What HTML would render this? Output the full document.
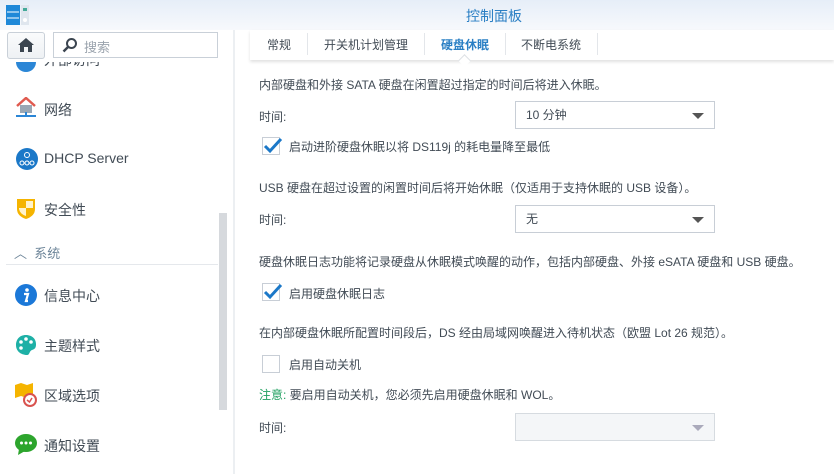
<!DOCTYPE html><html><head><meta charset="utf-8"><style>
*{margin:0;padding:0;box-sizing:border-box}
body{width:834px;height:474px;overflow:hidden;background:#fff;font-family:"Liberation Sans","Noto Sans CJK SC",sans-serif;font-size:12px;color:#414b55;position:relative}
.a{position:absolute;white-space:nowrap}
.title{left:0;top:0;width:834px;height:30px;background:linear-gradient(#e6eef8,#f7f9fc)}
.sb{left:0;top:30px;width:233px;height:444px;background:#fff}
.div{left:233px;top:30px;width:2px;height:444px;background:#eceff2}
.item{left:44px;font-size:14px;color:#414b55}
.sel{width:200px;height:28px;border:1px solid #c8ced6;background:#fff;padding-left:10px;line-height:26px}
.arr{position:absolute;right:10px;top:11px;border-left:6px solid transparent;border-right:6px solid transparent;border-top:6px solid #555}
.cb{width:18px;height:18px;border:1px solid #c8ced6;background:#fff}
</style></head><body>
<div class="a title"></div>
<svg class="a" style="left:6px;top:5px" width="24" height="20"><rect x="0" y="0" width="14" height="20" fill="#1e88d8"/><line x1="1" y1="7" x2="13" y2="7" stroke="#fff"/><line x1="1" y1="13" x2="13" y2="13" stroke="#fff"/><rect x="15" y="0" width="8" height="20" fill="#dfe6ee"/><rect x="17" y="3" width="4" height="3" fill="#4a9"/><circle cx="19" cy="15" r="2" fill="#fff"/></svg>
<div class="a" style="left:466px;top:6px;font-size:14px;color:#2a7fc4">控制面板</div>
<div class="a sb"></div>
<div class="a div"></div>
<div class="a" style="left:16px;top:52px;width:20px;height:20px;border-radius:10px;background:#2b86d6"></div>
<div class="a item" style="top:50px">外部访问</div>
<div class="a" style="left:0;top:30px;width:232px;height:32px;background:#fff"></div>
<div class="a" style="left:7px;top:32px;width:38px;height:27px;border:1px solid #c9d0d8;border-radius:3px;background:linear-gradient(#fafbfc,#eef1f4)"></div>
<svg class="a" style="left:17px;top:37px" width="18" height="16"><path d="M9 1 L1 8 H3 V15 H7 V10 H11 V15 H15 V8 H17 Z" fill="#3b4550"/></svg>
<div class="a" style="left:53px;top:32px;width:165px;height:26px;border:1px solid #c9d0d8;background:#fff"></div>
<svg class="a" style="left:62px;top:37px" width="16" height="16"><circle cx="9.5" cy="6.5" r="4.5" fill="none" stroke="#3b4550" stroke-width="2"/><line x1="6" y1="10" x2="1.5" y2="14.5" stroke="#3b4550" stroke-width="2.5"/></svg>
<div class="a" style="left:84px;top:37px;color:#9aa3ad;font-size:13px">搜索</div>
<svg class="a" style="left:15px;top:97px" width="22" height="22"><path d="M2 9 L11 1 L20 9" fill="none" stroke="#e05a4f" stroke-width="2.5"/><rect x="5" y="8" width="12" height="8" fill="#9aa7b4"/><line x1="1" y1="19" x2="21" y2="19" stroke="#2b86d6" stroke-width="2"/><line x1="11" y1="15" x2="11" y2="19" stroke="#2b86d6" stroke-width="2"/></svg>
<div class="a item" style="top:100px">网络</div>
<svg class="a" style="left:16px;top:148px" width="22" height="22"><circle cx="11" cy="11" r="11" fill="#1b78c8"/><circle cx="11" cy="7" r="2.5" fill="none" stroke="#fff"/><circle cx="6" cy="15" r="2" fill="none" stroke="#fff"/><circle cx="11" cy="15" r="2" fill="none" stroke="#fff"/><circle cx="16" cy="15" r="2" fill="none" stroke="#fff"/></svg>
<div class="a item" style="top:150px">DHCP Server</div>
<svg class="a" style="left:15px;top:197px" width="22" height="23"><path d="M2 2 H20 V12 Q20 19 11 22 Q2 19 2 12 Z" fill="#f5b400"/><path d="M11 4 H18 V11 H11 Z M4 11 H11 V19 Q5 17 4 12 Z" fill="#fff3cc"/></svg>
<div class="a item" style="top:200px">安全性</div>
<div class="a" style="left:14px;top:243px;color:#6d8599;font-size:13px">︿ &nbsp;系统</div>
<div class="a" style="left:6px;top:264px;width:212px;height:1px;background:#e5e8ec"></div>
<svg class="a" style="left:15px;top:284px" width="22" height="22"><circle cx="11" cy="11" r="11" fill="#1b78d8"/><circle cx="12" cy="6" r="1.8" fill="#fff"/><path d="M9 10 H13 L11 17 H13" fill="none" stroke="#fff" stroke-width="2.2"/></svg>
<div class="a item" style="top:286px">信息中心</div>
<svg class="a" style="left:15px;top:334px" width="22" height="22"><path d="M11 1 C4 1 1 6 1 11 C1 18 7 21 12 21 C15 21 14 17 17 16 C21 15 21 12 21 10 C21 4 16 1 11 1Z" fill="#1eb0a6"/><circle cx="6" cy="8" r="1.8" fill="#fff"/><circle cx="11" cy="5" r="1.8" fill="#fff"/><circle cx="16" cy="8" r="1.8" fill="#fff"/><circle cx="6" cy="14" r="1.8" fill="#fff"/></svg>
<div class="a item" style="top:336px">主题样式</div>
<svg class="a" style="left:14px;top:382px" width="24" height="26"><path d="M1 3 L7 1 L13 3 L19 1 V14 L13 16 L7 14 L1 16Z" fill="#f5b400"/><circle cx="16" cy="18" r="6" fill="#fff" stroke="#d9534f" stroke-width="2"/><path d="M13 18 L15.5 20 L18 16" fill="none" stroke="#d9534f" stroke-width="1.5"/></svg>
<div class="a item" style="top:386px">区域选项</div>
<svg class="a" style="left:15px;top:434px" width="22" height="21"><ellipse cx="11" cy="9" rx="11" ry="9" fill="#2da52d"/><path d="M4 15 L3 21 L10 17Z" fill="#2da52d"/><circle cx="6.5" cy="9" r="1.5" fill="#fff"/><circle cx="11" cy="9" r="1.5" fill="#fff"/><circle cx="15.5" cy="9" r="1.5" fill="#fff"/></svg>
<div class="a item" style="top:436px">通知设置</div>
<div class="a" style="left:219px;top:213px;width:8px;height:197px;background:#d6d9dd"></div>
<div class="a" style="left:250px;top:30px;width:584px;height:30px;background:#fff;box-shadow:0 2px 3px rgba(0,0,0,.12)"></div>
<div class="a" style="left:267px;top:36px">常规</div>
<div class="a" style="left:307px;top:33px;width:1px;height:22px;background:#e3e6ea"></div>
<div class="a" style="left:324px;top:36px">开关机计划管理</div>
<div class="a" style="left:424px;top:33px;width:1px;height:22px;background:#e3e6ea"></div>
<div class="a" style="left:441px;top:36px;color:#2a7fc4;font-weight:bold">硬盘休眠</div>
<div class="a" style="left:505px;top:33px;width:1px;height:22px;background:#e3e6ea"></div>
<div class="a" style="left:521px;top:36px">不断电系统</div>
<div class="a" style="left:597px;top:33px;width:1px;height:22px;background:#e3e6ea"></div>
<div class="a" style="left:460px;top:56px;width:9px;height:9px;background:#fff;transform:rotate(45deg);border-left:1px solid #dde1e5;border-top:1px solid #dde1e5"></div>
<div class="a" style="left:259px;top:76px">内部硬盘和外接 SATA 硬盘在闲置超过指定的时间后将进入休眠。</div>
<div class="a" style="left:259px;top:108px">时间:</div>
<div class="a sel" style="left:515px;top:101px">10 分钟<div class="arr"></div></div>
<div class="a cb" style="left:262px;top:137px"></div>
<svg class="a" style="left:262px;top:136px" width="22" height="20"><path d="M3 10 L8 15 L19 3" fill="none" stroke="#1b78c8" stroke-width="3"/></svg>
<div class="a" style="left:289px;top:138px">启动进阶硬盘休眠以将 DS119j 的耗电量降至最低</div>
<div class="a" style="left:259px;top:179px">USB 硬盘在超过设置的闲置时间后将开始休眠（仅适用于支持休眠的 USB 设备）。</div>
<div class="a" style="left:259px;top:211px">时间:</div>
<div class="a sel" style="left:515px;top:205px">无<div class="arr"></div></div>
<div class="a" style="left:259px;top:253px">硬盘休眠日志功能将记录硬盘从休眠模式唤醒的动作，包括内部硬盘、外接 eSATA 硬盘和 USB 硬盘。</div>
<div class="a cb" style="left:262px;top:283px"></div>
<svg class="a" style="left:262px;top:282px" width="22" height="20"><path d="M3 10 L8 15 L19 3" fill="none" stroke="#1b78c8" stroke-width="3"/></svg>
<div class="a" style="left:289px;top:285px">启用硬盘休眠日志</div>
<div class="a" style="left:259px;top:324px">在内部硬盘休眠所配置时间段后，DS 经由局域网唤醒进入待机状态（欧盟 Lot 26 规范）。</div>
<div class="a cb" style="left:262px;top:355px"></div>
<div class="a" style="left:289px;top:356px">启用自动关机</div>
<div class="a" style="left:259px;top:386px"><span style="color:#20a060">注意:</span> 要启用自动关机，您必须先启用硬盘休眠和 WOL。</div>
<div class="a" style="left:259px;top:419px">时间:</div>
<div class="a sel" style="left:515px;top:413px;background:#f4f6f8;border-color:#d6dbe0"><div class="arr" style="border-top-color:#aab"></div></div>
</body></html>
